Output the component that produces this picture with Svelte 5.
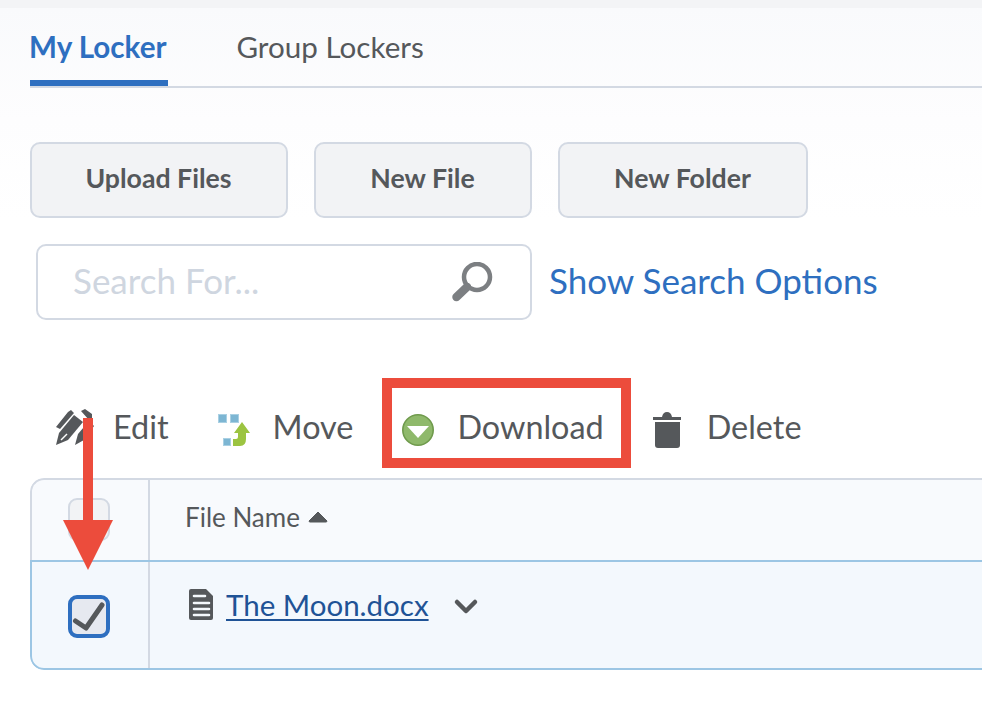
<script>
  const buttons = [
    { label: 'Upload Files', width: 258 },
    { label: 'New File', width: 218 },
    { label: 'New Folder', width: 250 }
  ];
</script>

<div class="page">
  <div class="strip"></div>
  <nav class="tabs">
    <span class="tab active">My Locker</span>
    <span class="tab">Group Lockers</span>
  </nav>

  <div class="buttons">
    {#each buttons as b}
      <button class="btn" style="width:{b.width}px">{b.label}</button>
    {/each}
  </div>

  <div class="search-row">
    <div class="search">
      <span class="placeholder">Search For...</span>
      <svg class="mag" width="44" height="40" viewBox="0 0 44 40">
        <circle cx="25" cy="15" r="13" fill="none" stroke="#7c7f82" stroke-width="4.5" />
        <path d="M15 25 L4.5 35" stroke="#7c7f82" stroke-width="8.5" stroke-linecap="round" />
      </svg>
    </div>
    <span class="link">Show Search Options</span>
  </div>

  <div class="toolbar">
    <span class="tool edit">
      <svg width="40" height="40" viewBox="0 0 40 40">
        <path d="M2 39 L5 27 L20 9 L29 16 L14 34 Z" fill="#55585b" />
        <path d="M21 39 L24 28 L35 15 L40 20 L30 34 Z" fill="#55585b" />
        <path d="M2 21 L14 6 L17 4 L20 7 L6 23 Z M27 5 L31 3 L38 8 L38 12 L35 14 Z" fill="#55585b" />
        <path d="M7 34 L13 28" stroke="#fff" stroke-width="1.5" />
      </svg>
      Edit
    </span>
    <span class="tool move">
      <svg class="i-move" width="36" height="38" viewBox="0 0 36 38">
        <rect x="2.5" y="6.5" width="8" height="8" fill="#7db6d3" stroke="#a9d0e3" />
        <rect x="14.5" y="6.5" width="8" height="8" fill="#7db6d3" stroke="#a9d0e3" />
        <rect x="7.5" y="30.5" width="7" height="7" fill="#7db6d3" stroke="#a9d0e3" />
        <path d="M17 38 L24 38 Q30 38 30 31 L30 25 L34 25 L26 14 L18 25 L22 25 L22 29 Q22 31 20 31 L17 31 Z" fill="#9cc441" />
      </svg>
      Move
    </span>
    <span class="tool download">
      <svg class="i-down" width="34" height="34" viewBox="0 0 34 34">
        <circle cx="17" cy="17" r="15.2" fill="#8fb96b" stroke="#6f9a4c" stroke-width="1.6" />
        <path d="M6 13 H28 L17 25 Z" fill="#fff" />
      </svg>
      Download
    </span>
    <span class="tool delete">
      <svg class="i-del" width="30" height="38" viewBox="0 0 30 38">
        <path d="M1 7 H10 Q11 2 15 2 Q19 2 20 7 H29 V10 H1 Z" fill="#55585b" />
        <path d="M3 12 H28 V35 Q28 38 25 38 H6 Q3 38 3 35 Z" fill="#55585b" />
      </svg>
      Delete
    </span>
  </div>

  <div class="table">
    <div class="row head">
      <div class="cell-check"><span class="box"></span></div>
      <div class="cell-name">
        File Name
        <svg width="20" height="12" viewBox="0 0 20 12"><path d="M10 1 L19 10 Q19 11 18 11 H2 Q1 11 1 10 Z" fill="#55585b" stroke="#55585b" stroke-linejoin="round" /></svg>
      </div>
    </div>
    <div class="row selected">
      <div class="cell-check">
        <span class="box checked">
          <svg width="36" height="36" viewBox="0 0 36 36"><path d="M3.5 23 L14 30 L30 7" fill="none" stroke="#55585b" stroke-width="5" stroke-linecap="round" stroke-linejoin="round" /></svg>
        </span>
      </div>
      <div class="cell-name file">
        <svg width="26" height="33" viewBox="0 0 26 33">
          <path d="M3 1 H18 L25 8 V30 Q25 32 23 32 H3 Q1 32 1 30 V3 Q1 1 3 1 Z" fill="#55585b" />
          <path d="M6 8 H17 M6 15 H21 M6 21 H21 M6 27 H21" stroke="#f4f8fc" stroke-width="2.6" stroke-linecap="round" />
        </svg>
        <span class="file-link">The Moon.docx</span>
        <svg class="chev" width="28" height="19" viewBox="0 0 28 19"><path d="M5 5 L14 14 L23 5" fill="none" stroke="#55585b" stroke-width="4.5" stroke-linecap="round" stroke-linejoin="round" /></svg>
      </div>
    </div>
  </div>

  <div class="callout"></div>
  <div class="arrow-shaft"></div>
  <div class="arrow-head"></div>
</div>

<style>
  :global(body) { margin: 0; background: #fff; }
  .page {
    position: relative;
    width: 982px;
    height: 724px;
    overflow: hidden;
    font-family: Lato, "Open Sans", sans-serif;
    color: #55585b;
    background: linear-gradient(#f9fafc 8px, #fdfdfe 120px, #fff 220px);
  }
  .strip { height: 8px; background: #f3f4f6; }
  .tabs {
    display: flex;
    gap: 68px;
    height: 78px;
    margin-left: 30px;
    border-bottom: 2px solid #d3d9e3;
    box-sizing: content-box;
  }
  .tab {
    font-size: 29.6px;
    line-height: 78px;
    height: 78px;
    box-sizing: border-box;
  }
  .tab.active {
    color: #2e6fc0;
    font-weight: 700;
    border-bottom: 6px solid #2e6fc0;
    text-indent: -1px;
    padding-right: 2px;
  }
  .buttons { display: flex; gap: 26px; margin: 54px 0 0 30px; }
  .btn {
    height: 76px;
    box-sizing: border-box;
    background: #f2f3f5;
    border: 2px solid #d3d9e3;
    border-radius: 10px;
    font: 700 26.7px Lato, sans-serif;
    color: #55585b;
    padding: 0 1px 4px 0;
  }
  .search-row { display: flex; align-items: center; margin: 26px 0 0 36px; }
  .search {
    width: 496px;
    height: 76px;
    box-sizing: border-box;
    border: 2px solid #d3d9e3;
    border-radius: 10px;
    background: #fff;
    display: flex;
    align-items: center;
    justify-content: space-between;
    padding: 0 36px 0 35px;
  }
  .placeholder { font-size: 35px; color: #cfd6e0; margin-bottom: 4px; }
  .mag { margin-right: -2px; }
  .link { margin-left: 17px; font-size: 35px; color: #2e6fc0; margin-bottom: 4px; }
  .toolbar {
    display: flex;
    align-items: center;
    height: 60px;
    margin: 76px 0 0 54px;
    font-size: 32.4px;
  }
  .tool { display: flex; align-items: center; }
  .edit { gap: 19px; }
  .move { gap: 21px; margin-left: 47px; }
  .download { gap: 22px; margin-left: 48px; }
  .delete { gap: 25px; margin-left: 48px; }
  .i-move { margin-top: 2px; }
  .i-down { margin-top: 8px; }
  .i-del { margin-top: 6px; }
  .table {
    width: 1000px;
    height: 192px;
    margin: 22px 0 0 30px;
    box-sizing: border-box;
    border-radius: 14px 0 0 14px;
    background: #f8fafd;
    overflow: hidden;
  }
  .row { display: flex; box-sizing: border-box; border-left: 2px solid #d3d9e3; }
  .head { height: 82px; border-top: 2px solid #d3d9e3; border-radius: 14px 0 0 0; }
  .selected {
    height: 110px;
    background: #f3f8fd;
    border: 2px solid #9cc6e4;
    border-radius: 0 0 0 14px;
  }
  .cell-check {
    width: 118px;
    flex: none;
    border-right: 2px solid #d3d9e3;
    display: flex;
    align-items: center;
    justify-content: center;
    box-sizing: border-box;
  }
  .box {
    width: 42px;
    height: 43px;
    box-sizing: border-box;
    border: 2px solid #d3d9e3;
    border-radius: 9px;
    background: #f2f3f5;
    display: block;
    margin: 0 2px 2px 0;
  }
  .box.checked {
    border: 4px solid #2e6fc0;
    background: #e6e9f0;
    position: relative;
    margin: 3px 2px 0 0;
  }
  .box.checked svg { position: absolute; left: 0; top: -1px; }
  .cell-name {
    display: flex;
    align-items: center;
    gap: 8px;
    padding: 0 0 6px 35px;
    font-size: 26px;
  }
  .file { padding: 0 0 22px 38px; gap: 12px; font-size: 29.5px; }
  .file-link { color: #1f5396; text-decoration: underline; text-underline-offset: 3px; }
  .chev { margin: 4px 0 0 11px; }
  .callout {
    position: absolute;
    left: 382px;
    top: 378px;
    width: 249px;
    height: 90px;
    box-sizing: border-box;
    border: 10px solid #ec4c3c;
  }
  .arrow-shaft {
    position: absolute;
    left: 83px;
    top: 418px;
    width: 10px;
    height: 110px;
    background: #ec4c3c;
  }
  .arrow-head {
    position: absolute;
    left: 63px;
    top: 520px;
    width: 0;
    height: 0;
    border-left: 25px solid transparent;
    border-right: 25px solid transparent;
    border-top: 50px solid #ec4c3c;
  }
</style>
